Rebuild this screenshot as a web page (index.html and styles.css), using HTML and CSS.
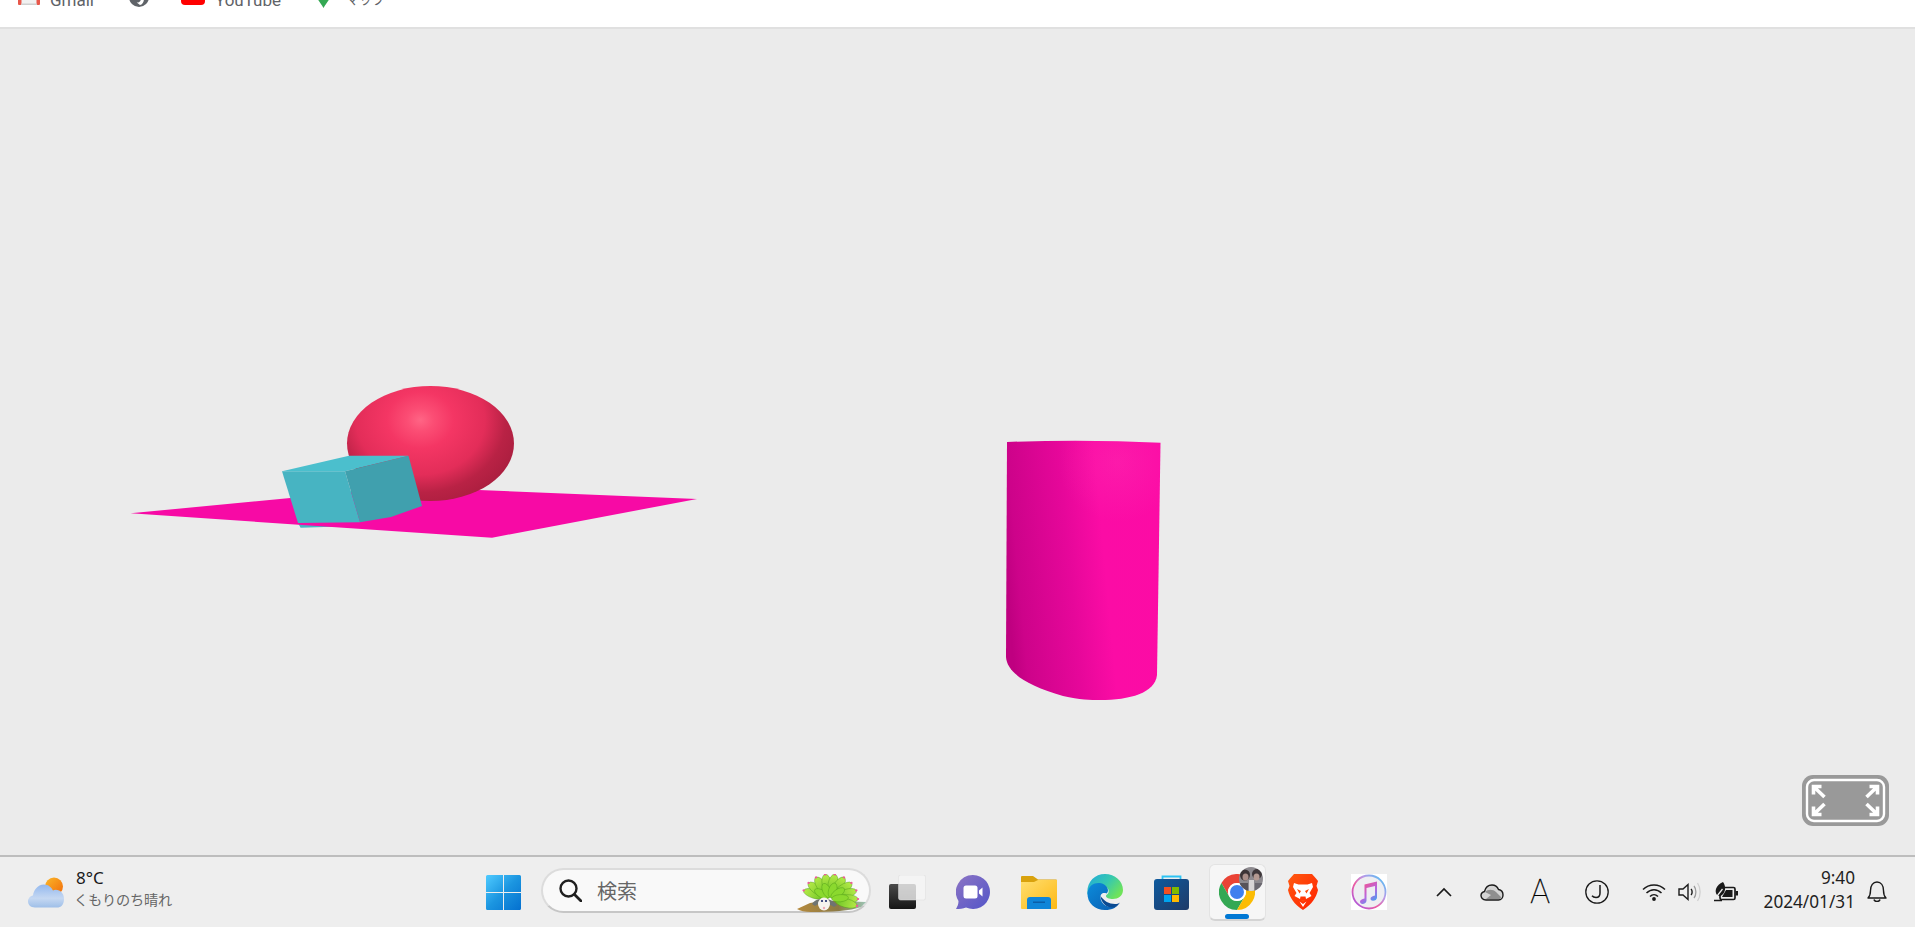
FILE: index.html
```html
<!DOCTYPE html>
<html lang="ja">
<head>
<meta charset="utf-8">
<title>3D scene</title>
<link rel="stylesheet" href="styles.css">
</head>
<body>
<div class="page">
  <header class="topbar">
    <nav class="bookmarks">
      <a class="bm bm-gmail">
        <svg class="bm-ico" width="22" height="16" viewBox="0 0 22 16"><rect x="1" y="1" width="20" height="15" rx="1.5" fill="#f1f1f1"/><rect x="0" y="1" width="3.5" height="15" rx="1" fill="#e8574a"/><rect x="18.5" y="1" width="3.5" height="15" rx="1" fill="#e8574a"/><rect x="3" y="14.5" width="16" height="1.5" fill="#d0d0d0"/></svg>
        <span class="bm-text">Gmail</span>
      </a>
      <a class="bm bm-circle">
        <svg class="bm-ico" width="20" height="20" viewBox="0 0 20 20"><circle cx="10" cy="10" r="10" fill="#5f6368"/><path d="M11 18c2.500-.5 4-3 4-6.500 0-1-.2-2-.6-2.800l-2.400 1c.3 1.600 0 4.300-1.800 5.300-.8.500-1.700.6-2.500.4z" fill="#fff"/></svg>
      </a>
      <a class="bm bm-yt">
        <svg class="bm-ico" width="24" height="17" viewBox="0 0 24 17"><rect width="24" height="17" rx="4" fill="#f00"/></svg>
        <span class="bm-text">YouTube</span>
      </a>
      <a class="bm bm-map">
        <svg class="bm-ico" width="13" height="18" viewBox="0 0 13 18"><path d="M0 6a6.500 6.500 0 0 1 13 0c0 4-4 7-6.500 12C4 13 0 10 0 6z" fill="#34a853"/><path d="M1 2h11l-4 6H3z" fill="#fbbc04"/></svg>
        <span class="bm-text">マップ</span>
      </a>
    </nav>
  </header>

  <main class="stage">
    <svg class="scene" width="1915" height="826" viewBox="0 29 1915 826">
      <defs>
        <radialGradient id="ball" gradientUnits="userSpaceOnUse" cx="420.400" cy="420" r="104" gradientTransform="translate(0 63) scale(1 .85)">
          <stop offset="0" stop-color="#ff6585"/>
          <stop offset=".13" stop-color="#fb4d74"/>
          <stop offset=".32" stop-color="#f43664"/>
          <stop offset=".62" stop-color="#e32d59"/>
          <stop offset=".82" stop-color="#b92245"/>
          <stop offset="1" stop-color="#ab1e3f"/>
        </radialGradient>
        <linearGradient id="cyl" gradientUnits="userSpaceOnUse" x1="1004" y1="560" x2="1165" y2="545">
          <stop offset="0" stop-color="#bf0080"/>
          <stop offset=".08" stop-color="#cd038a"/>
          <stop offset=".4" stop-color="#e6079a"/>
          <stop offset=".62" stop-color="#fb0ca5"/>
          <stop offset="1" stop-color="#fc0ba5"/>
        </linearGradient>
        <radialGradient id="cylshine" gradientUnits="userSpaceOnUse" cx="1118" cy="462" r="60">
          <stop offset="0" stop-color="#ff4dbd" stop-opacity=".22"/>
          <stop offset="1" stop-color="#ff4dbd" stop-opacity="0"/>
        </radialGradient>
      </defs>
      <polygon points="298,523 300.600,527.700 340,526.500" fill="#47b4c2"/>
      <polygon points="130.600,513.300 404,487 697,499 492,537.700" fill="#f70aa5"/>
      <ellipse cx="430.500" cy="443.500" rx="83.500" ry="57.500" fill="url(#ball)"/>
      <polygon points="282,471.300 345,471.300 360,522.300 298,523" fill="#47b4c2"/>
      <polygon points="282,471.300 349,455.700 408.500,455.700 345,471.300" fill="#4bbfcd"/>
      <polygon points="345,471.300 408.500,455.700 422,506 391,517 360,522.300" fill="#40a0ae"/>
      <path d="M1007 442Q1083 439 1160.500 442.700L1157 675C1155 693 1130 700 1100 700C1090 700 1080 700 1063 696C1025 685 1007 672 1006 657Z" fill="url(#cyl)"/>
      <path d="M1007 442Q1083 439 1160.500 442.700L1157 675C1155 693 1130 700 1100 700C1090 700 1080 700 1063 696C1025 685 1007 672 1006 657Z" fill="url(#cylshine)"/>
    </svg>
    <button class="fs-btn" type="button" aria-label="全画面">
      <svg width="87" height="51" viewBox="0 0 87 51">
        <rect width="87" height="51" rx="11" fill="#999"/>
        <rect x="5" y="5" width="77" height="41" rx="7" fill="none" stroke="#fff" stroke-width="2.400"/>
        <g fill="none" stroke="#fff" stroke-width="3.600">
          <path d="M11.500 19.500V11.500H19.500M11.500 11.500L22.500 22"/>
          <path d="M75.500 19.500V11.500H67.500M75.500 11.500L64.500 22"/>
          <path d="M11.500 31.500V39.500H19.500M11.500 39.500L22.500 29"/>
          <path d="M75.500 31.500V39.500H67.500M75.500 39.500L64.500 29"/>
        </g>
      </svg>
    </button>
  </main>

  <footer class="taskbar">
    <section class="weather">
      <svg class="weather-ico" width="37" height="32" viewBox="0 0 37 32">
        <defs>
          <linearGradient id="sun" x1="0" y1="0" x2="1" y2="1"><stop offset="0" stop-color="#fbb829"/><stop offset="1" stop-color="#f26a0a"/></linearGradient>
          <linearGradient id="cloud" x1="0" y1="0" x2="0" y2="1"><stop offset="0" stop-color="#93b8ee"/><stop offset=".6" stop-color="#c5d8f2"/><stop offset="1" stop-color="#9fbfe8"/></linearGradient>
        </defs>
        <circle cx="26" cy="9.500" r="9" fill="url(#sun)"/>
        <path d="M7 30.500C2.500 30.500 0 27.500 0 24.500C0 21.500 2.200 19 5 18.500C5.500 13.500 9.500 7.500 16 7.500C20.500 7.500 23.500 10.500 25 13.500C26.500 12.500 29 12.500 31 13.500C34 15 36 17.500 36 22C36 28 33 30.500 29 30.500Z" fill="url(#cloud)"/>
      </svg>
      <div class="weather-text">
        <div class="temp">8°C</div>
        <div class="cond">くもりのち晴れ</div>
      </div>
    </section>

    <div class="cell cell-win">
      <svg width="35" height="35" viewBox="0 0 35 35">
        <defs>
          <linearGradient id="win" gradientUnits="userSpaceOnUse" x1="0" y1="0" x2="35" y2="35"><stop offset="0" stop-color="#4fcbff"/><stop offset=".5" stop-color="#1b95e0"/><stop offset="1" stop-color="#0470cf"/></linearGradient>
        </defs>
        <path d="M1.500 0H17V17H0V1.500A1.500 1.500 0 0 1 1.500 0ZM18 0H33.500A1.500 1.500 0 0 1 35 1.500V17H18ZM0 18H17V35H1.500A1.500 1.500 0 0 1 0 33.500ZM18 18H35V33.500A1.500 1.500 0 0 1 33.500 35H18Z" fill="url(#win)"/>
      </svg>
    </div>

    <div class="search">
      <svg class="search-ico" width="23" height="23" viewBox="0 0 23 23"><circle cx="9.500" cy="9.500" r="8" fill="none" stroke="#1f1f1f" stroke-width="2.400"/><path d="M15.500 15.500L22 22" stroke="#1f1f1f" stroke-width="2.800" stroke-linecap="round"/></svg>
      <span class="search-text">検索</span>
      <svg class="search-deco" width="69" height="38" viewBox="6 8 69 38">
        <defs>
          <linearGradient id="feather" x1="0" y1="0" x2="0" y2="1"><stop offset="0" stop-color="#b6ea48"/><stop offset="1" stop-color="#6cc424"/></linearGradient>
          <linearGradient id="soil" x1="0" y1="0" x2="1" y2="0"><stop offset="0" stop-color="#b58a3e"/><stop offset=".6" stop-color="#8c7a44"/><stop offset="1" stop-color="#9cc4b4"/></linearGradient>
          <g id="fth"><ellipse cx="0" cy="-15" rx="4.400" ry="10" fill="url(#feather)" stroke="#4d9a18" stroke-width=".4"/><circle cx="0" cy="-25" r="1.100" fill="#ee5a9a"/></g>
          <g id="fth2"><ellipse cx="0" cy="-9" rx="3.600" ry="7.500" fill="#8bd92e" stroke="#4d9a18" stroke-width=".4"/></g>
        </defs>
        <path d="M6 43L19 37C35 34 55 35 75 36L70 41C60 45 40 46 20 46C14 46 9 45 6 43Z" fill="url(#soil)"/>
        <g transform="translate(39 33) scale(1.12 1)">
          <use href="#fth" transform="rotate(-70)"/>
          <use href="#fth" transform="rotate(-50)"/>
          <use href="#fth" transform="rotate(-30)"/>
          <use href="#fth" transform="rotate(-10)"/>
          <use href="#fth" transform="rotate(10)"/>
          <use href="#fth" transform="rotate(30)"/>
          <use href="#fth" transform="rotate(50)"/>
          <use href="#fth" transform="rotate(70)"/>
          <use href="#fth" transform="rotate(90)"/>
          <use href="#fth" transform="rotate(106)"/>
          <use href="#fth2" transform="rotate(-55)"/>
          <use href="#fth2" transform="rotate(-20)"/>
          <use href="#fth2" transform="rotate(15)"/>
          <use href="#fth2" transform="rotate(50)"/>
          <use href="#fth2" transform="rotate(85)"/>
        </g>
        <path d="M21 38C25 31 40 31 46 39L43 41C38 37 28 36 24 40Z" fill="#6f7472"/>
        <ellipse cx="33" cy="38" rx="6" ry="6.500" fill="#f6f3ee"/>
        <circle cx="31" cy="35" r="1.100" fill="#1b2a6b"/><circle cx="35" cy="35" r="1.100" fill="#1b2a6b"/>
        <circle cx="33" cy="42" r="1.200" fill="#f0a9b4"/>
      </svg>
    </div>

    <div class="cell cell-first">
      <svg width="37" height="34" viewBox="0 0 37 34">
        <defs><linearGradient id="tvd" x1="0" y1="0" x2="0" y2="1"><stop offset="0" stop-color="#4a4a4a"/><stop offset="1" stop-color="#151515"/></linearGradient></defs>
        <rect x="0" y="9" width="27" height="25" rx="2" fill="url(#tvd)"/>
        <rect x="9.500" y="0" width="27" height="25" rx="2" fill="#f6f6f6" fill-opacity=".78" stroke="#dcdcdc" stroke-width=".5"/>
      </svg>
    </div>
    <div class="cell">
      <svg width="34" height="34" viewBox="0 0 34 34">
        <defs><linearGradient id="chat" x1="0" y1="0" x2="1" y2="1"><stop offset="0" stop-color="#8c74c4"/><stop offset="1" stop-color="#5355c8"/></linearGradient></defs>
        <path d="M17 0A17 17 0 1 1 10 32.500C7 34 3.500 34 0 34C1.500 31.500 2.500 29 2.500 26A17 17 0 0 1 17 0Z" fill="url(#chat)"/>
        <rect x="7.500" y="10.500" width="14" height="13" rx="2.500" fill="#fff"/>
        <path d="M23 15.500L26.500 12.500V21.500L23 18.500Z" fill="#fff"/>
      </svg>
    </div>
    <div class="cell">
      <svg width="36" height="33" viewBox="0 0 36 33">
        <defs><linearGradient id="fold" x1="0" y1="0" x2="1" y2="1"><stop offset="0" stop-color="#ffdf70"/><stop offset="1" stop-color="#fdb813"/></linearGradient></defs>
        <path d="M1 0H12L17 3.500H35A1 1 0 0 1 36 4.500V8H0V1A1 1 0 0 1 1 0Z" fill="#d9a20d"/>
        <path d="M0 6H13L17 4H36V32A1 1 0 0 1 35 33H1A1 1 0 0 1 0 32Z" fill="url(#fold)"/>
        <path d="M6 33V24A3 3 0 0 1 9 21H27A3 3 0 0 1 30 24V33Z" fill="#0f85d8"/>
        <rect x="12" y="25.500" width="12" height="1.500" fill="#0a5ea8"/>
      </svg>
    </div>
    <div class="cell">
      <svg width="36" height="36" viewBox="0 0 36 36">
        <defs>
          <linearGradient id="edge1" x1="0" y1="0" x2="1" y2=".6"><stop offset="0" stop-color="#1fa9de"/><stop offset=".55" stop-color="#36c8b0"/><stop offset="1" stop-color="#6fe35a"/></linearGradient>
          <linearGradient id="edge2" x1="0" y1="0" x2="1" y2="1"><stop offset="0" stop-color="#0c8cdb"/><stop offset="1" stop-color="#0a5cb0"/></linearGradient>
        </defs>
        <path d="M18 0C28 0 36 7 36 16C36 22 31 25 26 25C22 25 19 24 19 22C19 21 20 20.500 21 19.500C22 18 22 15.500 20 13.500C17 10.500 12 10 8 12C5 13.500 2 17 0.500 21C-1 9 7 0 18 0Z" fill="url(#edge1)"/>
        <path d="M0.500 19C1.500 11 7.500 8.500 12.500 9C17 9.500 21 12.500 21 16.500C21 18 20 19 19.500 19.500C16 18 13 20 13.500 24C14 29 19 33 24 33C28.500 33 31.500 31 33 28.500C30 33.500 25 36 18 36C8 36 0 29 0.500 19Z" fill="url(#edge2)"/>
        <path d="M13.500 22C14 29 20 34 26 33.500C28 33.300 30.500 32 33 28.500C31.500 29.500 30 30 28 30C22 30 17 27 13.500 22Z" fill="#094a93"/>
      </svg>
    </div>
    <div class="cell">
      <svg width="35" height="35" viewBox="0 0 35 35">
        <defs><linearGradient id="store" x1="0" y1="0" x2="1" y2="1"><stop offset="0" stop-color="#0e5a9e"/><stop offset="1" stop-color="#1f3a68"/></linearGradient></defs>
        <path d="M8.500 6V1.500H26.500V6" fill="none" stroke="#2cc3f4" stroke-width="1.800"/>
        <rect x="0" y="4" width="35" height="31" rx="3" fill="url(#store)"/>
        <rect x="10" y="12" width="7" height="7" fill="#f25022"/>
        <rect x="18" y="12" width="7" height="7" fill="#7fba00"/>
        <rect x="10" y="20" width="7" height="7" fill="#00a4ef"/>
        <rect x="18" y="20" width="7" height="7" fill="#ffb900"/>
      </svg>
    </div>
    <div class="cell cell-chrome">
      <div class="chrome-tile">
        <svg class="chrome-ico" width="36" height="36" viewBox="0 0 36 36">
          <path d="M33.600 9A18 18 0 0 0 2.400 9L10.200 22.500A9 9 0 0 1 18 9Z" fill="#ea4335"/>
          <path d="M2.400 9A18 18 0 0 0 18 36L25.800 22.500A9 9 0 0 1 10.200 22.500Z" fill="#34a853"/>
          <path d="M33.600 9H18A9 9 0 0 1 25.800 22.500L18 36A18 18 0 0 0 33.600 9Z" fill="#fbbc04"/>
          <circle cx="18" cy="18" r="9" fill="#fff"/>
          <circle cx="18" cy="18" r="7" fill="#3f80ee"/>
        </svg>
        <svg class="chrome-avatar" width="24" height="24" viewBox="0 0 24 24">
          <defs><clipPath id="av"><circle cx="12" cy="12" r="12"/></clipPath></defs>
          <g clip-path="url(#av)">
            <rect width="24" height="24" fill="#8d8a8f"/>
            <ellipse cx="6" cy="8" rx="5" ry="5.500" fill="#3c3436"/>
            <ellipse cx="18" cy="7" rx="5" ry="5" fill="#3f383b"/>
            <ellipse cx="6.500" cy="10" rx="3" ry="3.500" fill="#a98e88"/>
            <ellipse cx="17.500" cy="10" rx="3" ry="3.500" fill="#b49a92"/>
            <rect x="10" y="13" width="5" height="11" fill="#d8d5d6"/>
            <rect x="0" y="16" width="9" height="8" fill="#57535a"/>
            <rect x="16" y="16" width="8" height="8" fill="#6b6870"/>
          </g>
        </svg>
        <span class="chrome-pill"></span>
      </div>
    </div>
    <div class="cell">
      <svg width="30" height="36" viewBox="0 0 30 36">
        <defs><linearGradient id="brave" x1="0" y1="0" x2="1" y2="1"><stop offset="0" stop-color="#ff5a10"/><stop offset="1" stop-color="#ff2000"/></linearGradient></defs>
        <path d="M6 0H24L28 4.500L30 7L28.500 12L30 16C28 24 24 30 15 36C6 30 2 24 0 16L1.500 12L0 7L2 4.500Z" fill="url(#brave)"/>
        <path d="M6 9L10.500 10.500H19.500L24 9L25 13L21.500 19L23.500 22L18 25L17.500 22.500H12.500L12 25L6.500 22L8.500 19L5 13Z" fill="#fff"/>
        <path d="M9 15L13 17L11.500 19.500ZM21 15L17 17L18.500 19.500ZM13 26H17L15 28Z" fill="#ff4a0a"/>
        <path d="M11.500 27.500L15 30L18.500 27.500L15 33Z" fill="#fff"/>
      </svg>
    </div>
    <div class="cell">
      <svg width="36" height="36" viewBox="0 0 36 36">
        <defs>
          <linearGradient id="ring" x1="0" y1="1" x2="1" y2="0"><stop offset="0" stop-color="#9a5cf0"/><stop offset=".4" stop-color="#ee5a9f"/><stop offset=".65" stop-color="#b89ae8"/><stop offset="1" stop-color="#3cc8f5"/></linearGradient>
          <linearGradient id="note" x1=".2" y1="0" x2=".8" y2="1"><stop offset="0" stop-color="#f8508a"/><stop offset=".55" stop-color="#b865de"/><stop offset="1" stop-color="#3aa6f2"/></linearGradient>
        </defs>
        <rect width="36" height="36" fill="#fff"/>
        <circle cx="18" cy="18" r="16.500" fill="#eeeef2" stroke="url(#ring)" stroke-width="1.800"/>
        <path d="M13.500 10.500L26 7.500V23.500C26 25.500 24 26.800 22 26.800C20.500 26.800 19.500 26 19.500 24.800C19.500 23 21.500 22 24 21.500V12L15.500 14V26.500C15.500 28.500 13.500 30 11.500 30C10 30 9 29 9 27.800C9 26 11 25 13.500 24.500Z" fill="url(#note)"/>
      </svg>
    </div>

    <div class="tray">
      <div class="tcell tcell-w">
        <svg width="16" height="10" viewBox="0 0 16 10"><path d="M1 9L8 2L15 9" fill="none" stroke="#1a1a1a" stroke-width="1.700"/></svg>
      </div>
      <div class="tcell tcell-w">
        <svg width="24" height="17" viewBox="0 0 24 17"><path d="M6 16C2.500 16 1 13.500 1 11.500C1 9.500 2.500 8 4.500 7.500C5.500 3.500 8.500 1 12 1C15 1 17.500 3 18.500 5.500C21 6 23 8 23 11C23 14 21 16 18.500 16Z" fill="#d4d4d4" stroke="#1a1a1a" stroke-width="1.400"/><path d="M5 8C8 5 13 5 16 8L21 13C21 14.500 20 15 18.500 15H6L11 11Z" fill="#8f8f8f"/></svg>
      </div>
      <div class="tcell tcell-w"><span class="ime">A</span></div>
      <div class="tcell tcell-j">
        <svg width="24" height="24" viewBox="0 0 24 24"><circle cx="12" cy="12" r="11.200" fill="none" stroke="#1a1a1a" stroke-width="1.300"/><path d="M15 5V13C15 16 13.500 17.500 11 17.500C9.500 17.500 8 17 7 15.800" fill="none" stroke="#1a1a1a" stroke-width="1.500"/></svg>
      </div>
      <div class="tcell tcell-n">
        <svg width="24" height="18" viewBox="0 0 24 18"><g fill="none" stroke="#1a1a1a" stroke-width="1.500"><path d="M1 6.500C7 .500 17 .500 23 6.500"/><path d="M4.500 10C9 5.500 15 5.500 19.500 10"/><path d="M8 13.500C10.500 11 13.500 11 16 13.500"/></g><circle cx="12" cy="16" r="1.900" fill="#1a1a1a"/></svg>
      </div>
      <div class="tcell tcell-n">
        <svg width="24" height="20" viewBox="0 0 24 20"><path d="M1 7H5L10 2.500V17.500L5 13H1Z" fill="none" stroke="#1a1a1a" stroke-width="1.400"/><path d="M13 7C14.500 8.500 14.500 11.500 13 13" fill="none" stroke="#1a1a1a" stroke-width="1.400"/><path d="M16 4C18.500 7 18.500 13 16 16" fill="none" stroke="#9a9a9a" stroke-width="1.300"/><path d="M19.500 1C23 6 23 14 19.500 19" fill="none" stroke="#d0d0d0" stroke-width="1.300"/></svg>
      </div>
      <div class="tcell tcell-n">
        <svg class="battery-ico" width="24" height="20" viewBox="0 0 24 20"><rect x="6" y="5.500" width="15" height="12" rx="1.500" fill="none" stroke="#1a1a1a" stroke-width="1.700"/><rect x="21.500" y="9" width="2.500" height="4.500" fill="#1a1a1a"/><path d="M12 8H18.500V15H8Z" fill="#1a1a1a"/><path d="M3 13C0 9 2 3 9 0C12 4 12 10 8 13C6.500 14.500 4.500 14 3 13Z" fill="#1a1a1a"/><path d="M1 17.500C3 14 6 10 8.500 7" fill="none" stroke="#eee" stroke-width="1.300"/><path d="M0 18.500H8" stroke="#1a1a1a" stroke-width="1.500"/></svg>
      </div>
      <div class="clock">
        <div class="clock-time">9:40</div>
        <div class="clock-date">2024/01/31</div>
      </div>
      <div class="bell">
        <svg width="20" height="22" viewBox="0 0 20 22"><path d="M1 17C3 15 3.500 13 3.500 9.500C3.500 4.500 6 1 10 1C14 1 16.500 4.500 16.500 9.500C16.500 13 17 15 19 17Z" fill="none" stroke="#1a1a1a" stroke-width="1.400" stroke-linejoin="round"/><path d="M7 18.500C7.500 21 12.500 21 13 18.500" fill="none" stroke="#1a1a1a" stroke-width="1.400"/></svg>
      </div>
    </div>
  </footer>
</div>
</body>
</html>
```

FILE: styles.css
```css
* { box-sizing: border-box; }
html, body { margin: 0; padding: 0; }
body {
  width: 1915px;
  height: 927px;
  overflow: hidden;
  font-family: "Noto Sans", "Noto Sans CJK JP", sans-serif;
  color: #1a1a1a;
}
.page {
  display: flex;
  flex-direction: column;
  height: 927px;
}
svg { display: block; flex: none; }

/* Browser bookmark bar, scrolled mostly out of the picture */
.topbar {
  height: 29px;
  flex: none;
  background: #fff;
  border-bottom: 2px solid #e0e0e0;
  overflow: hidden;
}
.bookmarks {
  display: flex;
  align-items: flex-end;
  height: 24px;
  margin-top: -12px;
  padding-left: 18px;
}
.bm { display: flex; align-items: flex-end; }
.bm-text {
  font-family: "Roboto", "Noto Sans CJK JP", sans-serif;
  font-size: 17px;
  line-height: 24px;
  color: #5f6368;
  height: 24px;
  margin-left: 10px;
}
.bm-gmail .bm-ico { margin-bottom: 7px; }
.bm-gmail { width: 111px; }
.bm-circle { width: 52px; }
.bm-circle .bm-ico { margin-bottom: 5px; }
.bm-yt { width: 136px; }
.bm-yt .bm-ico { margin-bottom: 7px; }
.bm-map .bm-ico { margin-bottom: 4px; }
.bm-map .bm-text { margin-left: 16px; font-size: 13px; }

/* 3D canvas */
.stage {
  position: relative;
  flex: none;
  height: 826px;
  background: #ebebeb;
}
.scene { width: 1915px; height: 826px; }
.fs-btn {
  position: absolute;
  right: 26px;
  bottom: 29px;
  padding: 0;
  border: 0;
  background: none;
}

/* Windows taskbar */
.taskbar {
  flex: none;
  height: 72px;
  display: flex;
  align-items: center;
  background: #eeeeee;
  border-top: 2px solid #bdbdbd;
}
.weather {
  width: 470px;
  flex: none;
  display: flex;
  align-items: center;
  padding-left: 28px;
}
.weather-ico { margin-top: 2px; }
.weather-text { margin-left: 9px; margin-bottom: 7px; }
.temp {
  margin-left: 2px;
  font-size: 17px;
  line-height: 23px;
  color: #1a1a1a;
}
.cond {
  font-size: 14.200px;
  line-height: 22px;
  color: #666;
  letter-spacing: -.2px;
}
.cell {
  width: 66px;
  flex: none;
  display: flex;
  justify-content: center;
  align-items: center;
}
.cell-first { margin-left: 3px; }
.search {
  width: 330px;
  height: 45px;
  flex: none;
  margin-left: 5px;
  margin-bottom: 3px;
  display: flex;
  align-items: center;
  padding-left: 16px;
  background: #f9f9f9;
  border: 2px solid #dcdcdc;
  border-bottom-color: #c6c6c6;
  border-radius: 23px;
}
.search-text {
  margin-left: 15px;
  font-family: "Noto Sans CJK JP", sans-serif;
  font-size: 20px;
  font-weight: 400;
  color: #666;
}
.search-deco { margin-left: auto; margin-right: 3px; margin-top: 4px; }

.chrome-tile {
  position: relative;
  width: 57px;
  height: 57px;
  display: flex;
  justify-content: center;
  align-items: center;
  background: #f6f6f6;
  border: 1px solid #e3e3e3;
  border-bottom: 2px solid #d4d4d4;
  border-radius: 6px;
}
.chrome-avatar {
  position: absolute;
  top: 2px;
  right: 2px;
}
.chrome-pill {
  position: absolute;
  left: 15px;
  bottom: 0;
  width: 24px;
  height: 5px;
  border-radius: 3px;
  background: #0078d4;
}

.tray {
  display: flex;
  align-items: center;
  margin-left: 18px;
}
.tcell {
  flex: none;
  display: flex;
  justify-content: center;
  align-items: center;
}
.tcell-w { width: 48px; }
.tcell-j { width: 66px; margin-right: 6px; }
.tcell-n { width: 36px; }
.ime {
  font-family: "Roboto", sans-serif;
  font-weight: 100;
  font-size: 33px;
  line-height: 34px;
  color: #000;
  -webkit-text-stroke: .3px #000;
}
.clock {
  width: 111px;
  flex: none;
  margin-bottom: 5px;
  text-align: right;
  font-size: 17.200px;
  line-height: 24px;
  color: #1f1f1f;
}
.bell {
  width: 40px;
  flex: none;
  padding-left: 4px;
  display: flex;
  justify-content: center;
}
```
